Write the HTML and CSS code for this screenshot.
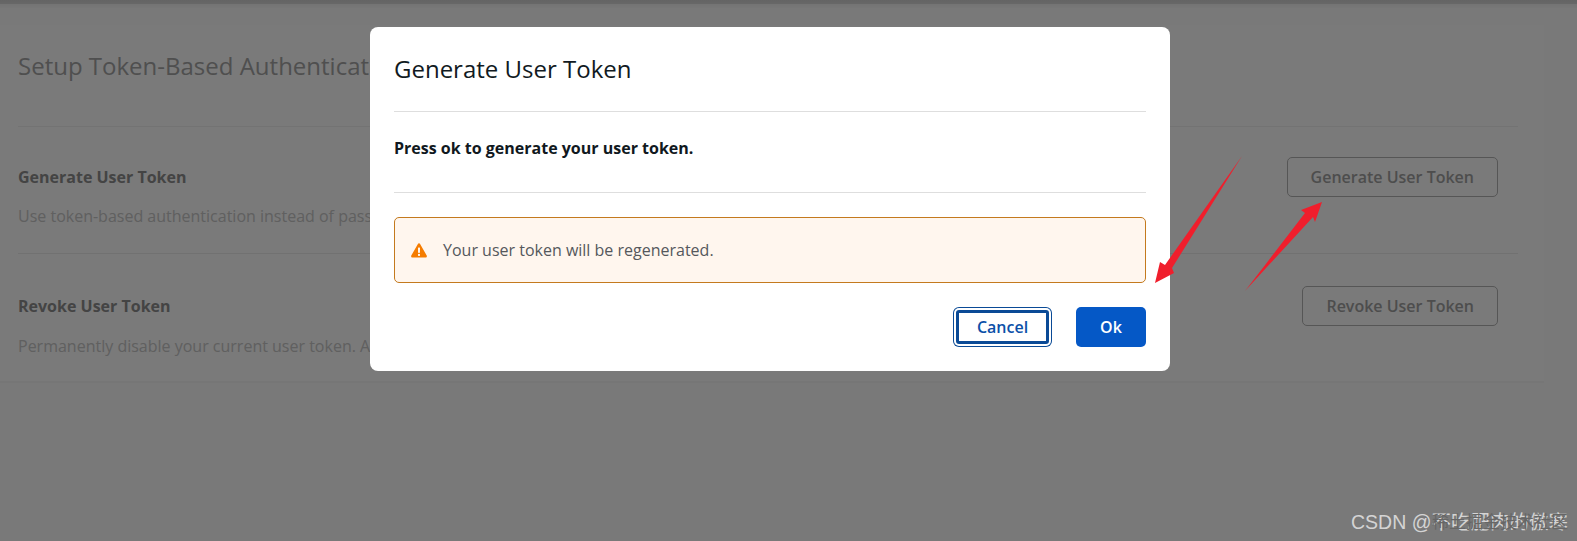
FILE: index.html
```html
<!DOCTYPE html>
<html lang="en">
<head>
  <meta charset="UTF-8">
  <title>Generate User Token</title>
  <link rel="stylesheet" href="styles.css">
</head>
<body>
  <div class="top-band"></div>

  <section class="card">
    <h2 class="card-title">Setup Token-Based Authentication</h2>

    <div class="token-row first">
      <div class="row-text">
        <h3>Generate User Token</h3>
        <p>Use token-based authentication instead of password-based authentication.</p>
      </div>
      <button class="outline-btn">Generate User Token</button>
    </div>

    <div class="token-row">
      <div class="row-text">
        <h3>Revoke User Token</h3>
        <p>Permanently disable your current user token. Applications using it will stop working.</p>
      </div>
      <button class="outline-btn">Revoke User Token</button>
    </div>
  </section>

  <div class="overlay"></div>

  <div class="modal">
    <h2 class="modal-title">Generate User Token</h2>
    <p class="modal-body">Press ok to generate your user token.</p>
    <div class="alert">
      <svg class="alert-icon" viewBox="0 0 16 15" width="16" height="15">
        <path d="M8 0.3c.5 0 .9.3 1.1.7l6.6 11.6c.5.9-.1 2-1.1 2H1.4c-1 0-1.600-1.100-1.100-2L6.900 1c.2-.4.600-.7 1.100-.7z" fill="#f57c00"/>
        <rect x="7" y="4.600" width="2" height="5.200" fill="#fff6ee"/>
        <rect x="7" y="10.900" width="2" height="2" fill="#fff6ee"/>
      </svg>
      <span>Your user token will be regenerated.</span>
    </div>
    <div class="modal-actions">
      <button class="cancel-btn">Cancel</button>
      <button class="ok-btn">Ok</button>
    </div>
  </div>

  <!-- red annotation arrows drawn on the screenshot -->
  <svg class="arrows" viewBox="0 0 1577 541" width="1577" height="541">
    <polygon points="1242,156 1172,268 1174,273 1155,283 1160,262 1165,265" fill="#f01e2c"/>
    <polygon points="1245,291 1305,213 1301,210 1322,202 1315,222 1313,217" fill="#f01e2c"/>
  </svg>

  <div class="watermark"><span class="wm-under">稀土掘金技术社区</span>CSDN @不吃肥肉的傲寒</div>
</body>
</html>
```

FILE: styles.css
```css
* {
  box-sizing: border-box;
}
html, body {
  height: 100%;
}
body {
  margin: 0;
  background: #fcfcfc;
  font-family: "Open Sans", sans-serif;
  overflow: hidden;
  position: relative;
}
h2, h3, p {
  margin: 0;
  font-weight: normal;
}
.top-band {
  height: 8px;
  background: linear-gradient(#d2d2d2 0, #d8d8d8 50%, #f2f2f2 50%, #fafafa 100%);
}
.card {
  margin: 17px 33px 0 0;
  height: 358px;
  padding: 0 26px 0 18px;
  background: #fff;
  border-bottom: 2px solid #f6f6f6;
}
.card-title {
  font-size: 24px;
  line-height: 33px;
  padding: 24px 0 43px;
  color: #a6a6a6;
  border-bottom: 1px solid #f0f0f0;
  height: 102px;
}
.token-row {
  display: flex;
  justify-content: space-between;
  align-items: flex-start;
  padding: 32px 20px 0 0;
  height: 129px;
}
.token-row.first {
  border-bottom: 1px solid #ececec;
  height: 127px;
  padding-top: 30px;
}
.row-text {
  padding-top: 9px;
}
.first .row-text p {
  margin-top: 17px;
}
.row-text h3 {
  font-size: 16px;
  font-weight: 700;
  line-height: 22px;
  color: #8e8e8e;
}
.row-text p {
  font-size: 16px;
  line-height: 22px;
  margin-top: 18px;
  color: #c8c8c8;
}
.outline-btn {
  height: 40px;
  padding: 0 23px;
  background: transparent;
  border: 1px solid #b4b4b4;
  border-radius: 5px;
  font-family: inherit;
  font-size: 16px;
  font-weight: 600;
  color: #a2a2a2;
}
.overlay {
  position: absolute;
  inset: 0;
  background: rgba(0, 0, 0, 0.52);
}
.modal {
  position: absolute;
  left: 370px;
  top: 27px;
  width: 800px;
  height: 344px;
  padding: 0 24px;
  background: #fff;
  border-radius: 8px;
}
.modal-title {
  height: 85px;
  padding-top: 25px;
  font-size: 24px;
  line-height: 33px;
  color: #111a22;
  border-bottom: 1px solid #dedede;
}
.modal-body {
  height: 81px;
  padding-top: 25px;
  font-size: 16px;
  font-weight: 700;
  line-height: 22px;
  color: #101820;
  border-bottom: 1px solid #dedede;
}
.alert {
  display: flex;
  align-items: center;
  gap: 16px;
  height: 66px;
  margin-top: 24px;
  padding-left: 16px;
  background: #fff6ee;
  border: 1px solid #c47a1e;
  border-radius: 5px;
  font-size: 16px;
  color: #55585c;
}
.alert-icon {
  flex: none;
}
.modal-actions {
  display: flex;
  justify-content: flex-end;
  align-items: center;
  gap: 24px;
  margin-top: 24px;
}
.cancel-btn, .ok-btn {
  font-family: inherit;
  font-size: 16px;
  font-weight: 600;
}
.cancel-btn {
  width: 93px;
  height: 34px;
  margin: 3px;
  background: #fff;
  color: #0b4fa8;
  border: 3px solid #0a4a96;
  border-radius: 3px;
  box-shadow: 0 0 0 2px #fff, 0 0 0 3px #0a4a96;
}
.ok-btn {
  width: 70px;
  height: 40px;
  background: #0558c6;
  color: #fff;
  border: none;
  border-radius: 5px;
}
.arrows {
  position: absolute;
  left: 0;
  top: 0;
}
.watermark {
  position: absolute;
  right: 9px;
  bottom: 8px;
  font-family: "Liberation Sans", "Noto Sans CJK SC", sans-serif;
  font-size: 19.500px;
  line-height: 22px;
  color: #d4d4d4;
  white-space: nowrap;
}
.wm-under {
  position: absolute;
  right: 0;
  top: 1px;
  font-size: 17px;
  color: #666;
}
```
